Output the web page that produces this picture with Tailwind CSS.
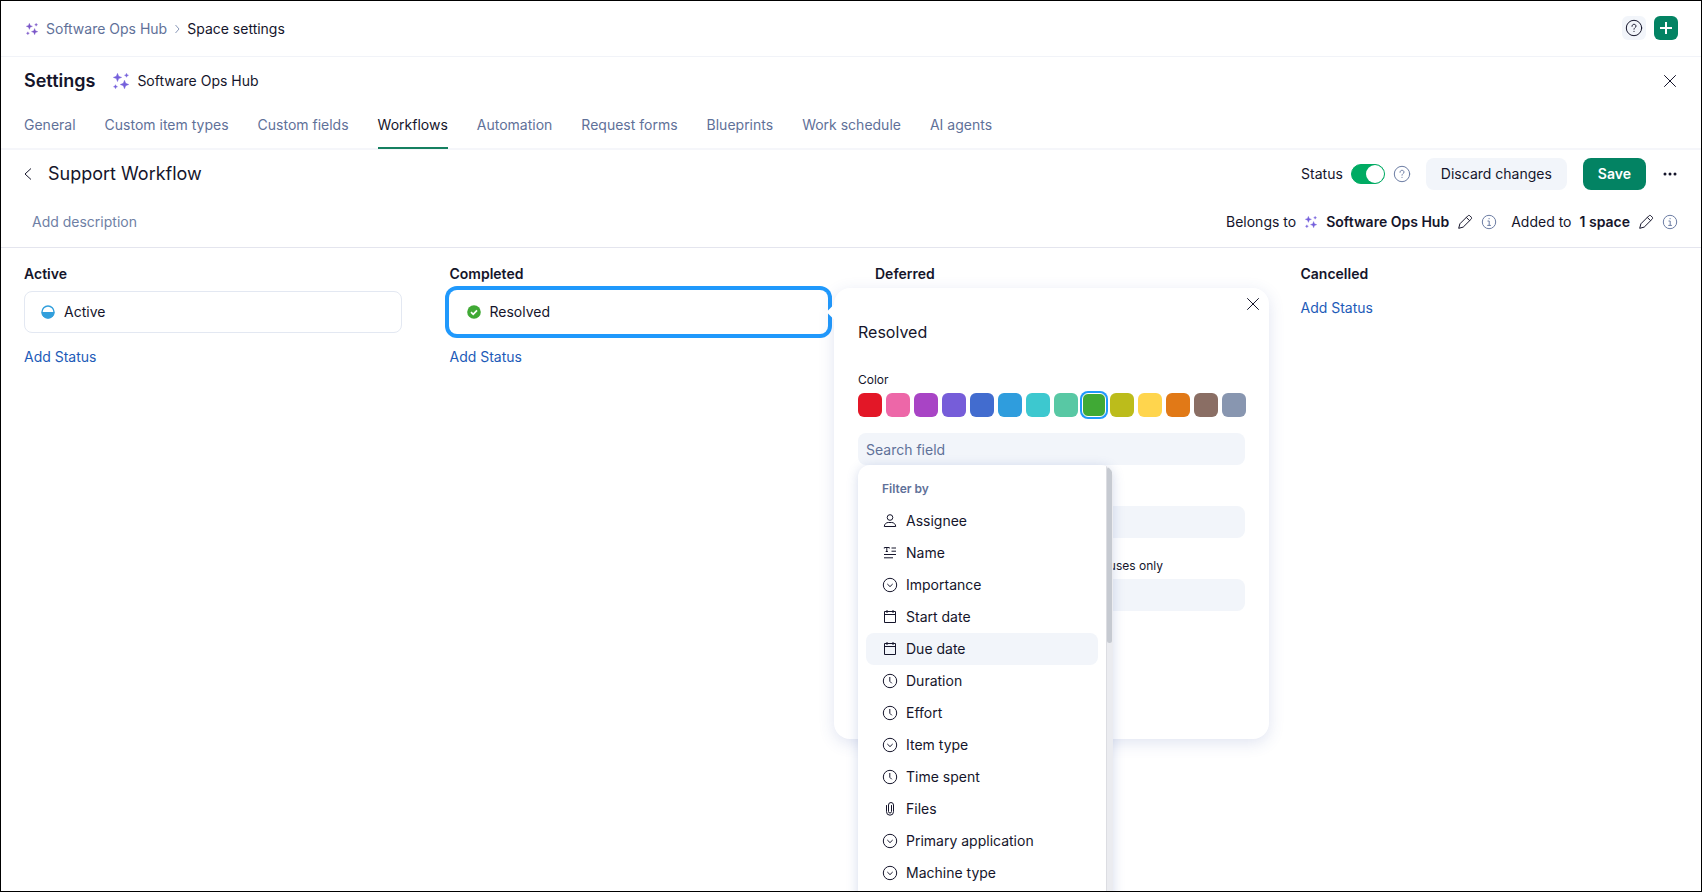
<!DOCTYPE html>
<html lang="en">
<head>
  <meta charset="UTF-8" />
  <title>Space settings</title>
  <script src="https://cdn.jsdelivr.net/npm/@tailwindcss/browser@4"></script>
</head>
<body class="relative h-screen overflow-hidden bg-white font-['Inter',sans-serif] text-sm text-[#15152b]">
  <!-- Icon sprite -->
  <svg class="hidden">
    <symbol id="sparkles" viewBox="0 0 16 16">
      <path fill="currentColor" stroke="currentColor" stroke-width=".4" stroke-linejoin="round" d="M4.500.300l1.200 2.900 3 1.200-3 1.200-1.200 3-1.200-3-3-1.200 3-1.200zM11.500 7.200l1.200 3.100 3.100 1.200-3.100 1.200-1.200 3.100-1.200-3.100-3.100-1.200 3.100-1.200zM13.500.300l.6 1.400 1.400.6-1.400.6-.6 1.400-.6-1.400-1.400-.6 1.400-.6zM2.500 11.700l.6 1.400 1.400.6-1.400.6-.6 1.400-.6-1.400-1.400-.6 1.400-.6z"/>
    </symbol>
    <symbol id="help" viewBox="0 0 18 18" fill="none" stroke="currentColor" stroke-linecap="round">
      <circle cx="9" cy="9" r="7.700"/>
      <path d="M7 7.300c0-1.200.9-2 2-2s2 .8 2 1.800c0 1.500-2 1.500-2 3.100M9 12.300v.2"/>
    </symbol>
    <symbol id="info" viewBox="0 0 16 16" fill="none" stroke="currentColor">
      <circle cx="8" cy="8" r="6.700"/>
      <path d="M6.500 7h1.700v4.300M6.300 11.400h3.600M7.500 4.700h1.200"/>
    </symbol>
    <symbol id="pencil" viewBox="0 0 16 16" fill="none" stroke="currentColor" stroke-linejoin="round">
      <path d="M1.700 14.300l1.200-4.500 7.800-7.800c.8-.8 1.600-.8 2.300-.1l1.100 1.100c.7.7.7 1.500-.1 2.300L6.200 13.100zM9.300 3.400L12.600 6.700"/>
    </symbol>
    <symbol id="close" viewBox="0 0 14 14" fill="none" stroke="currentColor" stroke-linecap="round">
      <path d="M1.500 1.500l11 11M12.500 1.500l-11 11"/>
    </symbol>
    <symbol id="person" viewBox="0 0 16 16" fill="none" stroke="currentColor" stroke-linejoin="round">
      <circle cx="8" cy="4.500" r="2.800"/>
      <path d="M2.300 13.500c0-2.500 2-4 4-4h3.400c2 0 4 1.500 4 4z"/>
    </symbol>
    <symbol id="text" viewBox="0 0 16 16" fill="none" stroke="currentColor">
      <path d="M2.300 3.500v-1h5v1M4.800 2.500v4M3.700 6.500h2.200M9.500 3h4.500M9.500 6.200h4.500M2 9.500h12M2 12.800h9"/>
    </symbol>
    <symbol id="select" viewBox="0 0 16 16" fill="none" stroke="currentColor">
      <circle cx="8" cy="8" r="6.700"/>
      <path d="M5.300 7L8 9.600 10.700 7"/>
    </symbol>
    <symbol id="calendar" viewBox="0 0 16 16" fill="none" stroke="currentColor">
      <path d="M2.500 2.500h11v11h-11zM2.500 5.500h11M5 1v3M11 1v3"/>
    </symbol>
    <symbol id="clock" viewBox="0 0 16 16" fill="none" stroke="currentColor">
      <circle cx="8" cy="8" r="6.700"/>
      <path d="M7.800 4v4.300l2 2"/>
    </symbol>
    <symbol id="clip" viewBox="0 0 16 16" fill="none" stroke="currentColor" stroke-linecap="round">
      <path d="M4.500 4.500v6.200a3.500 3.500 0 0 0 7 0V4a2.500 2.500 0 0 0-5 0v6.500a1.500 1.500 0 0 0 3 0V4.500"/>
    </symbol>
  </svg>

  <header class="flex h-[57px] items-center border-b border-[#f1f3f8] px-6">
    <nav class="flex items-center pt-px">
      <a href="#" class="flex items-center text-[#5f7199]"><svg class="mr-2 ml-[2px] size-3 text-[#7a56c8]"><use href="#sparkles"/></svg>Software Ops Hub</a>
      <svg class="mx-[6px] size-2 text-[#8a98b8]" viewBox="0 0 8 8" fill="none" stroke="currentColor"><path d="M2.500 0l3.500 4-3.500 4"/></svg>
      <span>Space settings</span>
    </nav>
    <div class="ml-auto flex gap-2">
      <button aria-label="Help" class="grid size-6 place-items-center rounded-md bg-[#f2f5fa]"><svg class="size-[18px]"><use href="#help"/></svg></button>
      <button aria-label="Create" class="grid size-6 place-items-center rounded-md bg-[#038363] text-white"><svg class="size-3" viewBox="0 0 12 12" stroke="currentColor" stroke-width="2"><path d="M6 0v12M0 6h12"/></svg></button>
    </div>
  </header>

  <section class="flex h-12 items-center px-6">
    <h1 class="text-lg font-semibold">Settings</h1>
    <svg class="mr-2 ml-[18px] size-4 text-[#7560dc]"><use href="#sparkles"/></svg>
    <span>Software Ops Hub</span>
    <button aria-label="Close settings" class="ml-auto p-[1px]"><svg class="size-[14px]"><use href="#close"/></svg></button>
  </section>

  <nav class="flex h-[45px] gap-[29px] border-b-2 border-[#f5f6fa] px-6 text-[#5f7199]">
    <a href="#" class="pt-[10px]">General</a>
    <a href="#" class="pt-[10px]">Custom item types</a>
    <a href="#" class="pt-[10px]">Custom fields</a>
    <a href="#" class="-mb-px border-b-2 border-[#158060] pt-[10px] text-[#15152b]">Workflows</a>
    <a href="#" class="pt-[10px]">Automation</a>
    <a href="#" class="pt-[10px]">Request forms</a>
    <a href="#" class="pt-[10px]">Blueprints</a>
    <a href="#" class="pt-[10px]">Work schedule</a>
    <a href="#" class="pt-[10px]">AI agents</a>
  </nav>

  <section class="border-b border-[#e4e5ee] px-6">
    <div class="flex h-[47px] items-center">
      <button aria-label="Back" class="mr-4"><svg class="h-3 w-2" viewBox="0 0 8 12" fill="none" stroke="currentColor"><path d="M7 .5L1 6l6 5.500"/></svg></button>
      <h2 class="text-lg">Support Workflow</h2>
      <div class="ml-auto flex items-center">
        <label for="status" class="mr-2">Status</label>
        <input id="status" type="checkbox" role="switch" checked class="mr-2 h-5 w-[34px] appearance-none rounded-full border border-[#00ab63] bg-[#00ab63] before:ml-auto before:block before:size-[18px] before:rounded-full before:bg-white" />
        <svg class="mr-[15px] size-[18px] text-[#6b7ca3]"><use href="#help"/></svg>
        <button class="mr-4 h-8 rounded-lg bg-[#f2f5fa] px-[15px]">Discard changes</button>
        <button class="mr-4 h-8 rounded-lg bg-[#038363] px-[15px] font-semibold text-white">Save</button>
        <button aria-label="More"><svg class="h-4 w-4" viewBox="0 0 16 16" fill="currentColor"><circle cx="3" cy="8" r="1.500"/><circle cx="8" cy="8" r="1.500"/><circle cx="13" cy="8" r="1.500"/></svg></button>
      </div>
    </div>
    <div class="flex h-[50px] items-center">
      <input aria-label="Description" placeholder="Add description" class="ml-2 w-60 outline-none placeholder:text-[#6f7fa5]" />
      <div class="ml-auto flex items-center">
        Belongs to
        <svg class="mx-[9px] size-3 text-[#7560dc]"><use href="#sparkles"/></svg>
        <a href="#" class="font-semibold">Software Ops Hub</a>
        <button aria-label="Edit owner" class="mx-2"><svg class="size-4"><use href="#pencil"/></svg></button>
        <svg class="mr-[14px] size-4 text-[#6b7ca3]"><use href="#info"/></svg>
        Added to
        <a href="#" class="ml-2 font-semibold">1 space</a>
        <button aria-label="Edit spaces" class="mx-2"><svg class="size-4"><use href="#pencil"/></svg></button>
        <svg class="size-4 text-[#6b7ca3]"><use href="#info"/></svg>
      </div>
    </div>
  </section>

  <main class="grid grid-cols-4 pt-4">
    <section class="px-6">
      <h3 class="font-semibold leading-5">Active</h3>
      <div class="mt-[7px] flex h-[42px] items-center gap-2 rounded-lg border border-[#e3e8f2] px-[15px]">
        <svg class="size-4" viewBox="0 0 16 16"><circle cx="8" cy="8" r="6" fill="#fff" stroke="#329fdc" stroke-width="1.400"/><path d="M1.500 8h13a6.500 6.500 0 0 1-13 0z" fill="#329fdc"/></svg>
        Active
      </div>
      <a href="#" class="mt-[14px] inline-block leading-5 text-[#1d5bb8]">Add Status</a>
    </section>

    <section class="px-6">
      <h3 class="font-semibold leading-5">Completed</h3>
      <div class="relative -mx-px mt-[6px] flex h-11 items-center gap-2 rounded-lg px-[17px] ring-4 ring-[#2099fc]">
        <svg class="size-4" viewBox="0 0 16 16"><circle cx="8" cy="8" r="6.800" fill="#40a935"/><path d="M5 8.200l2.200 2.100L11 6.300" fill="none" stroke="#fff" stroke-width="1.700"/></svg>
        Resolved

        <!-- Status editor -->
        <div class="absolute -top-[2px] left-full z-10 ml-[6px] h-[451px] w-[435px] rounded-2xl bg-white px-6 shadow-[0_4px_16px_rgba(60,90,170,0.16)]">
          <div class="absolute top-[18px] -left-[5px] size-3 rotate-45 bg-white"></div>
          <button aria-label="Close" class="absolute top-[9px] right-[9px]"><svg class="size-[14px]"><use href="#close"/></svg></button>
          <h4 class="pt-8 text-base">Resolved</h4>
          <p class="mt-7 text-xs leading-4">Color</p>
          <div class="mt-[5px] flex gap-1">
            <button aria-label="Red" class="size-6 shrink-0 rounded-md bg-[#e31727]"></button>
            <button aria-label="Pink" class="size-6 shrink-0 rounded-md bg-[#ed67a8]"></button>
            <button aria-label="Purple" class="size-6 shrink-0 rounded-md bg-[#a844c5]"></button>
            <button aria-label="Violet" class="size-6 shrink-0 rounded-md bg-[#765dd9]"></button>
            <button aria-label="Indigo" class="size-6 shrink-0 rounded-md bg-[#426ccf]"></button>
            <button aria-label="Blue" class="size-6 shrink-0 rounded-md bg-[#2f9ddd]"></button>
            <button aria-label="Turquoise" class="size-6 shrink-0 rounded-md bg-[#3dc8cf]"></button>
            <button aria-label="Mint" class="size-6 shrink-0 rounded-md bg-[#58c8a4]"></button>
            <button aria-label="Green" class="size-6 shrink-0 rounded-md border border-white bg-[#40a935] ring-2 ring-[#2099fc]"></button>
            <button aria-label="Lime" class="size-6 shrink-0 rounded-md bg-[#bcbc1b]"></button>
            <button aria-label="Yellow" class="size-6 shrink-0 rounded-md bg-[#ffd54d]"></button>
            <button aria-label="Orange" class="size-6 shrink-0 rounded-md bg-[#e17917]"></button>
            <button aria-label="Brown" class="size-6 shrink-0 rounded-md bg-[#8a6e64]"></button>
            <button aria-label="Gray" class="size-6 shrink-0 rounded-md bg-[#8896b0]"></button>
          </div>

          <div class="relative mt-4">
            <input aria-label="Search field" placeholder="Search field" class="block h-8 w-full rounded-lg bg-[#f2f5fa] px-2 outline-none placeholder:text-[#5f7199]" />

            <!-- Field picker -->
            <div class="absolute top-full left-0 flex h-[440px] w-[255px] overflow-hidden rounded-xl bg-white shadow-[0_2px_12px_rgba(60,90,170,0.22)]">
              <div class="flex-1 px-2">
                <p class="mb-2 px-4 pt-4 text-xs leading-4 font-semibold text-[#5f7199]">Filter by</p>
                <ul>
                  <li><button class="flex h-8 w-full items-center gap-2 rounded-lg px-4"><svg class="size-4"><use href="#person"/></svg>Assignee</button></li>
                  <li><button class="flex h-8 w-full items-center gap-2 rounded-lg px-4"><svg class="size-4"><use href="#text"/></svg>Name</button></li>
                  <li><button class="flex h-8 w-full items-center gap-2 rounded-lg px-4"><svg class="size-4"><use href="#select"/></svg>Importance</button></li>
                  <li><button class="flex h-8 w-full items-center gap-2 rounded-lg px-4"><svg class="size-4"><use href="#calendar"/></svg>Start date</button></li>
                  <li><button class="flex h-8 w-full items-center gap-2 rounded-lg bg-[#f2f5fa] px-4"><svg class="size-4"><use href="#calendar"/></svg>Due date</button></li>
                  <li><button class="flex h-8 w-full items-center gap-2 rounded-lg px-4"><svg class="size-4"><use href="#clock"/></svg>Duration</button></li>
                  <li><button class="flex h-8 w-full items-center gap-2 rounded-lg px-4"><svg class="size-4"><use href="#clock"/></svg>Effort</button></li>
                  <li><button class="flex h-8 w-full items-center gap-2 rounded-lg px-4"><svg class="size-4"><use href="#select"/></svg>Item type</button></li>
                  <li><button class="flex h-8 w-full items-center gap-2 rounded-lg px-4"><svg class="size-4"><use href="#clock"/></svg>Time spent</button></li>
                  <li><button class="flex h-8 w-full items-center gap-2 rounded-lg px-4"><svg class="size-4"><use href="#clip"/></svg>Files</button></li>
                  <li><button class="flex h-8 w-full items-center gap-2 rounded-lg px-4"><svg class="size-4"><use href="#select"/></svg>Primary application</button></li>
                  <li><button class="flex h-8 w-full items-center gap-2 rounded-lg px-4"><svg class="size-4"><use href="#select"/></svg>Machine type</button></li>
                </ul>
              </div>
              <div class="w-[7px] border-l border-[#dcdde2] bg-[#ebecf0] pr-px pt-[2px]">
                <div class="h-44 rounded-full bg-[#c6cad1]"></div>
              </div>
            </div>
          </div>

          <input aria-label="Field value" class="mt-[41px] block h-8 w-full rounded-lg bg-[#f2f5fa] px-2 outline-none" />
          <label for="statuses" class="mt-5 block pr-[82px] text-right text-xs leading-4">statuses only</label>
          <input id="statuses" class="mt-[5px] block h-8 w-full rounded-lg bg-[#f2f5fa] px-2 outline-none" />
        </div>
      </div>
      <a href="#" class="mt-[13px] inline-block leading-5 text-[#1d5bb8]">Add Status</a>
    </section>

    <section class="px-6">
      <h3 class="font-semibold leading-5">Deferred</h3>
    </section>

    <section class="px-6">
      <h3 class="font-semibold leading-5">Cancelled</h3>
      <a href="#" class="mt-[14px] inline-block leading-5 text-[#1d5bb8]">Add Status</a>
    </section>
  </main>

  <!-- Window frame, kept above the open menu -->
  <div class="pointer-events-none absolute inset-0 z-20 border border-black"></div>
</body>
</html>
